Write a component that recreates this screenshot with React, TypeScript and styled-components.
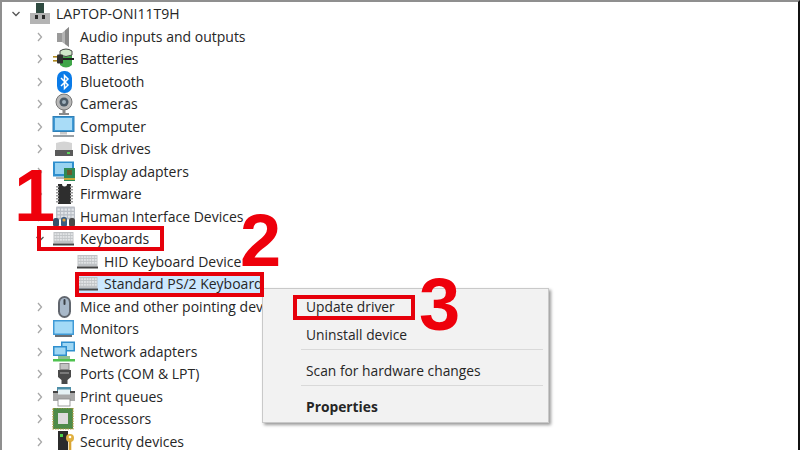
import React from "react";
import styled, { createGlobalStyle } from "styled-components";

const Global = createGlobalStyle`
  html, body { margin: 0; padding: 0; background: #fff; }
  #root { width: 800px; height: 450px; overflow: hidden; }
`;

const Page = styled.div`
  position: relative;
  box-sizing: border-box;
  width: 800px;
  height: 450px;
  overflow: hidden;
  background: #fff;
  border-top: 2px solid #8f8f8f;
  border-left: 2px solid #8f8f8f;
  border-right: 2px solid #111;
  font-family: "Open Sans", "Noto Sans", sans-serif;
  color: #222;
`;

const Tree = styled.ul`
  position: relative;
  list-style: none;
  margin: 0;
  padding: 1px 0 0;
`;

const Row = styled.li<{ $level: number }>`
  display: flex;
  align-items: center;
  height: 22.5px;
  padding-left: ${(p) => 9 + p.$level * 24}px;
  white-space: nowrap;
`;

const Chevron = styled.span`
  display: flex;
  align-items: center;
  justify-content: center;
  width: 10px;
  height: 10px;
  margin-right: 7px;
`;

const IconBox = styled.span`
  display: flex;
  align-items: center;
  justify-content: center;
  width: 24px;
  height: 22px;
  margin-right: 4px;
  flex: none;
`;

const Label = styled.span`
  font-size: 14px;
  line-height: 20px;
  color: #262626;
`;

const Selection = styled.div`
  position: absolute;
  left: 77px;
  top: 272px;
  width: 183px;
  height: 21px;
  background: #cce8ff;
`;

const RedBox = styled.div<{ $l: number; $t: number; $w: number; $h: number }>`
  position: absolute;
  box-sizing: border-box;
  left: ${(p) => p.$l}px;
  top: ${(p) => p.$t}px;
  width: ${(p) => p.$w}px;
  height: ${(p) => p.$h}px;
  border: 4px solid #e6000b;
  z-index: 3;
`;

const Step = styled.div<{ $l: number; $t: number }>`
  position: absolute;
  left: ${(p) => p.$l}px;
  top: ${(p) => p.$t}px;
  font-family: "Liberation Sans", Arial, sans-serif;
  font-weight: 700;
  font-size: 74px;
  line-height: 74px;
  color: #ee000b;
  z-index: 4;
`;

const Menu = styled.div`
  position: absolute;
  left: 260px;
  top: 286px;
  box-sizing: border-box;
  width: 287px;
  height: 135px;
  padding: 3px 2px;
  background: #f2f2f2;
  border: 1px solid #c9c9c9;
  box-shadow: 2px 2px 3px rgba(0, 0, 0, 0.4);
  z-index: 2;
`;

const MenuItem = styled.div<{ $bold?: boolean }>`
  display: flex;
  align-items: center;
  height: 28px;
  padding-left: 41px;
  font-size: 13.8px;
  font-weight: ${(p) => (p.$bold ? 700 : 400)};
  color: #262626;
`;

const MenuRule = styled.div`
  height: 1px;
  margin: 1px 3px 6px 36px;
  background: #d9d9d9;
`;

const Svg = ({ children, w = 24, h = 22 }: { children: React.ReactNode; w?: number; h?: number }) => (
  <svg width={w} height={h} viewBox="0 0 24 22">{children}</svg>
);

const Icons: Record<string, React.ReactNode> = {
  root: (
    <Svg>
      <rect x="8" y="0" width="8" height="11" fill="#2e4a40" />
      <rect x="2" y="10" width="20" height="11" fill="#b4b4b4" />
      <rect x="7" y="12" width="3" height="4" fill="#2a2a2a" />
      <rect x="14" y="12" width="3" height="4" fill="#2a2a2a" />
    </Svg>
  ),
  audio: (
    <Svg>
      <rect x="5" y="7" width="5" height="9" fill="#9a9a9a" />
      <path d="M10 7 L17 1 V21 L10 16 Z" fill="#b5b5b5" />
      <path d="M13 4.5 L17 1 V21 L13 18 Z" fill="#8a8a8a" />
    </Svg>
  ),
  battery: (
    <Svg>
      <path d="M8 3 Q14 -1 20 3 V17 Q14 22 8 17 Z" fill="#3fa648" />
      <path d="M8 3 Q14 -1 20 3 V7 Q14 10 8 7 Z" fill="#cfe8c9" stroke="#4a4a4a" strokeWidth="1" />
      <rect x="1" y="8" width="4" height="1.6" fill="#b08a20" />
      <rect x="1" y="12" width="4" height="1.6" fill="#b08a20" />
      <rect x="5" y="6.5" width="6" height="9" rx="1" fill="#2f2f2f" />
      <rect x="11" y="10" width="11" height="2" fill="#222" />
    </Svg>
  ),
  bluetooth: (
    <Svg>
      <rect x="5" y="0" width="15" height="22" rx="7" fill="#0a7be8" />
      <path d="M9 7 L16 14 L12.5 17.5 V4.5 L16 8 L9 15" fill="none" stroke="#fff" strokeWidth="1.5" />
    </Svg>
  ),
  camera: (
    <Svg>
      <circle cx="12" cy="9" r="8" fill="#b9b9b9" stroke="#777" strokeWidth="1" />
      <circle cx="12" cy="9" r="4.5" fill="#4c5a66" />
      <circle cx="12" cy="9" r="2" fill="#9fb0bd" />
      <rect x="10.5" y="17" width="3" height="3" fill="#888" />
      <rect x="7" y="20" width="10" height="2" fill="#8a8a8a" />
    </Svg>
  ),
  computer: (
    <Svg>
      <rect x="1" y="0.5" width="21" height="15" fill="#3f9ad6" stroke="#2f7fb6" />
      <rect x="3" y="2" width="17" height="12" fill="#a9dcf7" />
      <rect x="8" y="16" width="7" height="2.5" fill="#c9c9c9" />
      <rect x="1" y="19" width="21" height="2" fill="#9aa0a5" />
    </Svg>
  ),
  disk: (
    <Svg>
      <path d="M4 5 Q12 2 20 5 V12 H4 Z" fill="#d4d4d4" />
      <rect x="3" y="12" width="18" height="6" fill="#5a5a5a" />
      <rect x="15" y="14" width="3" height="2" fill="#5dd15d" />
    </Svg>
  ),
  display: (
    <Svg>
      <rect x="1" y="0.5" width="21" height="15" fill="#2f8fce" />
      <rect x="3" y="2" width="17" height="11" fill="#98d3f2" />
      <rect x="4" y="16" width="8" height="2" fill="#b5b5b5" />
      <rect x="12" y="7" width="11" height="13" fill="#2f8a55" />
      <rect x="15" y="9" width="5" height="5" fill="#6a5a2c" />
      <rect x="12" y="17" width="11" height="2" fill="#c9a93a" />
    </Svg>
  ),
  firmware: (
    <Svg>
      <rect x="6" y="1" width="13" height="20" fill="#2e2e2e" />
      <path d="M10 1 a2.5 2.5 0 0 0 5 0 Z" fill="#fff" />
      <g fill="#9a9a9a">
        {[3, 6, 9, 12, 15, 18].map((y) => (
          <React.Fragment key={y}>
            <rect x="4" y={y} width="3" height="1.5" />
            <rect x="18" y={y} width="3" height="1.5" />
          </React.Fragment>
        ))}
      </g>
    </Svg>
  ),
  hid: (
    <Svg>
      <rect x="4" y="0.5" width="19" height="13" rx="1" fill="#b9bec6" />
      <g fill="#e2e5e9">
        {[2.5, 6, 9.5].map((y) =>
          [6, 9.5, 13, 16.5, 20].map((x) => <rect key={`${x}-${y}`} x={x - 0.5} y={y} width="2.4" height="2.2" />)
        )}
      </g>
      <rect x="1" y="12" width="6" height="9" rx="2.5" fill="#35506b" />
      <rect x="9" y="11" width="6" height="10" rx="2.5" fill="#3b5e82" />
      <rect x="17" y="12" width="6" height="9" rx="2.5" fill="#4a4a4a" />
      <circle cx="12" cy="14" r="1.6" fill="#e0a13a" />
    </Svg>
  ),
  keyboard: (
    <Svg>
      <rect x="1.5" y="4" width="20" height="11.5" fill="#bfc2c5" />
      <g fill="#e2e4e6">
        {[5.2, 8, 10.8].map((y) =>
          [2.5, 5.2, 7.9, 10.6, 13.3, 16, 18.7].map((x) => <rect key={`${x}-${y}`} x={x} y={y} width="2" height="1.9" />)
        )}
      </g>
      <rect x="1" y="15.5" width="21" height="2" fill="#444" />
    </Svg>
  ),
  mouse: (
    <Svg>
      <rect x="6" y="0" width="13" height="22" rx="6.5" fill="#61666e" />
      <rect x="8" y="2" width="9" height="18" rx="4.5" fill="#a8b8c9" />
      <rect x="11.5" y="3" width="2" height="6" rx="1" fill="#3c4046" />
    </Svg>
  ),
  monitor: (
    <Svg>
      <rect x="1" y="2" width="21" height="15" fill="#3f9ad6" />
      <rect x="2.5" y="3.5" width="18" height="12" fill="#a3daf7" />
      <rect x="3" y="17" width="17" height="2" fill="#6a6f74" />
    </Svg>
  ),
  network: (
    <Svg>
      <rect x="9" y="0.5" width="14" height="10" fill="#2f8fce" />
      <rect x="10.5" y="2" width="11" height="7" fill="#9fd7f4" />
      <rect x="1" y="5" width="14" height="10" fill="#2f8fce" />
      <rect x="2.5" y="6.5" width="11" height="7" fill="#9fd7f4" />
      <rect x="6" y="15" width="12" height="3" fill="#8fbf8f" />
      <rect x="1" y="18" width="22" height="2.5" fill="#4fc24f" />
    </Svg>
  ),
  ports: (
    <Svg>
      <rect x="8" y="0.5" width="9" height="6" fill="#c2c2c2" stroke="#8a8a8a" />
      <path d="M6 7 H19 V14 L15.5 17 V21 H9.5 V17 L6 14 Z" fill="#4a4a4a" />
      <rect x="8" y="9" width="9" height="2" fill="#7a7a7a" />
    </Svg>
  ),
  print: (
    <Svg>
      <rect x="1" y="5" width="22" height="10" fill="#a9a9a9" />
      <rect x="5" y="1" width="14" height="5" fill="#4f8fa8" />
      <rect x="6" y="3.5" width="12" height="5" fill="#e6f2f5" />
      <rect x="6" y="13" width="12" height="7" fill="#fff" stroke="#888" strokeWidth="0.8" />
      <rect x="1" y="5" width="5" height="2" fill="#444" />
      <rect x="18" y="5" width="5" height="2" fill="#444" />
    </Svg>
  ),
  cpu: (
    <Svg>
      <rect x="1" y="0" width="20" height="21" fill="#4e8b4a" stroke="#b49a3c" strokeWidth="1.2" strokeDasharray="1.5 1" />
      <rect x="6" y="5" width="10" height="11" fill="#dcdcdc" />
    </Svg>
  ),
  security: (
    <Svg>
      <rect x="6" y="0" width="10" height="22" fill="#2b2b2b" />
      <rect x="8" y="3" width="3" height="3" fill="#4bd04b" />
      <circle cx="18" cy="7" r="4" fill="#e0b040" />
      <circle cx="18" cy="6" r="1.3" fill="#fff" />
      <rect x="16.7" y="10" width="2.6" height="11" fill="#d9a533" />
    </Svg>
  ),
};

const Chev = ({ open }: { open?: boolean }) => (
  <svg width="10" height="10" viewBox="0 0 10 10">
    <path
      d={open ? "M1.5 3 L5 6.5 L8.5 3" : "M3 1 L6.5 5 L3 9"}
      fill="none"
      stroke={open ? "#555" : "#a8a8a8"}
      strokeWidth="1.3"
    />
  </svg>
);

type Item = { level: number; icon: string; label: string; open?: boolean; leaf?: boolean };

const items: Item[] = [
  { level: 0, icon: "root", label: "LAPTOP-ONI11T9H", open: true },
  { level: 1, icon: "audio", label: "Audio inputs and outputs" },
  { level: 1, icon: "battery", label: "Batteries" },
  { level: 1, icon: "bluetooth", label: "Bluetooth" },
  { level: 1, icon: "camera", label: "Cameras" },
  { level: 1, icon: "computer", label: "Computer" },
  { level: 1, icon: "disk", label: "Disk drives" },
  { level: 1, icon: "display", label: "Display adapters" },
  { level: 1, icon: "firmware", label: "Firmware" },
  { level: 1, icon: "hid", label: "Human Interface Devices" },
  { level: 1, icon: "keyboard", label: "Keyboards", open: true },
  { level: 2, icon: "keyboard", label: "HID Keyboard Device", leaf: true },
  { level: 2, icon: "keyboard", label: "Standard PS/2 Keyboard", leaf: true },
  { level: 1, icon: "mouse", label: "Mice and other pointing devices" },
  { level: 1, icon: "monitor", label: "Monitors" },
  { level: 1, icon: "network", label: "Network adapters" },
  { level: 1, icon: "ports", label: "Ports (COM & LPT)" },
  { level: 1, icon: "print", label: "Print queues" },
  { level: 1, icon: "cpu", label: "Processors" },
  { level: 1, icon: "security", label: "Security devices" },
];

export default function App() {
  return (
    <Page>
      <Global />
      <Selection />
      <Tree>
        {items.map((it) => (
          <Row key={it.label} $level={it.level}>
            <Chevron>{it.leaf ? null : <Chev open={it.open} />}</Chevron>
            <IconBox>{Icons[it.icon]}</IconBox>
            <Label>{it.label}</Label>
          </Row>
        ))}
      </Tree>
      <Menu>
        <MenuItem>Update driver</MenuItem>
        <MenuItem>Uninstall device</MenuItem>
        <MenuRule />
        <MenuItem>Scan for hardware changes</MenuItem>
        <MenuRule />
        <MenuItem $bold>Properties</MenuItem>
      </Menu>
      <RedBox $l={35} $t={224} $w={127} $h={25} />
      <RedBox $l={73} $t={270} $w={189} $h={25} />
      <RedBox $l={291} $t={293} $w={122} $h={25} />
      <Step $l={12} $t={157}>1</Step>
      <Step $l={238} $t={202}>2</Step>
      <Step $l={417} $t={266}>3</Step>
    </Page>
  );
}
